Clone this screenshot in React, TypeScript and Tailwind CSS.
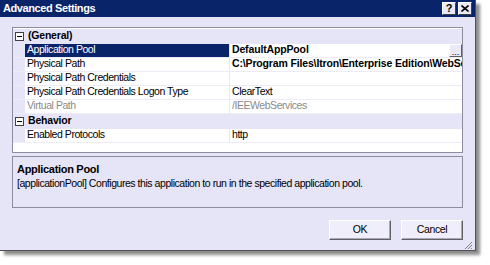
import React from 'react';

type Row = { name: string; value?: string; bold?: boolean; dim?: boolean; selected?: boolean; ellipsis?: boolean };
type Group = { title: string; rows: Row[] };

const groups: Group[] = [
  {
    title: '(General)',
    rows: [
      { name: 'Application Pool', value: 'DefaultAppPool', bold: true, selected: true, ellipsis: true },
      { name: 'Physical Path', value: 'C:\\Program Files\\Itron\\Enterprise Edition\\WebServices', bold: true },
      { name: 'Physical Path Credentials', value: '' },
      { name: 'Physical Path Credentials Logon Type', value: 'ClearText' },
      { name: 'Virtual Path', value: '/IEEWebServices', dim: true },
    ],
  },
  {
    title: 'Behavior',
    rows: [{ name: 'Enabled Protocols', value: 'http' }],
  },
];

const MinusBox = () => (
  <div className="w-[9px] h-[9px] border border-[#404040] bg-white flex items-center justify-center">
    <div className="w-[5px] h-px bg-black" />
  </div>
);

const Button = ({ label }: { label: string }) => (
  <button className="w-[62px] h-[20px] bg-[#f0eefa] border border-t-white border-l-white border-r-[#606060] border-b-[#606060] shadow-[inset_-1px_-1px_0_#a8a6c0] text-[10.5px] tracking-[-0.4px] text-black leading-none">
    {label}
  </button>
);

const TitleBtn = ({ children }: { children: React.ReactNode }) => (
  <div className="w-[14px] h-[13px] bg-[#ebe9f8] border border-t-white border-l-white border-r-[#404040] border-b-[#404040] flex items-center justify-center text-[11px] font-bold text-black leading-none">
    {children}
  </div>
);

export default function App() {
  return (
    <div className="w-[490px] h-[265px] bg-white font-['Liberation_Sans',sans-serif]">
      <div className="w-[476px] h-[251px] bg-[#e6e4f7] border-r border-b border-[#505050] shadow-[4px_4px_3px_rgba(0,0,0,0.45)] flex flex-col">
        <div className="h-[19px] bg-[#0a246a] flex items-center justify-between pl-[3px] pr-[3px]">
          <span className="text-white font-bold text-[11px] tracking-[-0.4px]">Advanced Settings</span>
          <div className="flex gap-[2px]">
            <TitleBtn>?</TitleBtn>
            <TitleBtn>
              <svg width="8" height="7" viewBox="0 0 8 7">
                <path d="M0.5 0.5 L7.5 6.5 M7.5 0.5 L0.5 6.5" stroke="black" strokeWidth="1.6" />
              </svg>
            </TitleBtn>
          </div>
        </div>

        <div className="flex flex-col px-[12px] pt-[10px] text-[10.5px] tracking-[-0.45px]">
          <div className="h-[126px] border border-[#8c8ca0] bg-white flex flex-col overflow-hidden pt-[1px]">
            {groups.map((g) => (
              <React.Fragment key={g.title}>
                <div className="h-[15px] bg-[#e6e4f7] flex items-center shrink-0">
                  <div className="w-[12px] flex justify-center pl-[1px]">
                    <MinusBox />
                  </div>
                  <span className="pl-[3px] font-bold tracking-[-0.2px] text-black">{g.title}</span>
                </div>
                {g.rows.map((r) => (
                  <div key={r.name} className="h-[14px] flex shrink-0 border-b border-[#ecebf6]">
                    <div className="w-[12px] bg-[#e6e4f7]" />
                    <div
                      className={`w-[205px] flex items-center pl-[2px] border-r border-[#e6e4f7] ${
                        r.selected ? 'bg-[#0a246a] text-white' : r.dim ? 'text-[#8a8a8a]' : 'text-black'
                      }`}
                    >
                      {r.name}
                    </div>
                    <div className="flex-1 flex items-center pl-[2px] overflow-hidden relative">
                      <span
                        className={`whitespace-nowrap ${r.bold ? 'font-bold tracking-[-0.15px]' : ''} ${
                          r.dim ? 'text-[#8a8a8a]' : 'text-black'
                        }`}
                      >
                        {r.value}
                      </span>
                      {r.ellipsis && (
                        <div className="absolute right-0 top-0 w-[13px] h-[13px] bg-[#ebe9f8] border border-t-white border-l-white border-r-[#606060] border-b-[#606060] flex items-end justify-center text-[9px] tracking-normal leading-[8px] text-black">
                          ...
                        </div>
                      )}
                    </div>
                  </div>
                ))}
              </React.Fragment>
            ))}
          </div>

          <div className="mt-[3px] h-[52px] border border-[#8c8ca0] bg-[#e6e4f7] px-[4px] pt-[5px] flex flex-col">
            <span className="font-bold text-[11px] tracking-[-0.3px] text-black leading-[14px]">Application Pool</span>
            <span className="text-black leading-[14px]">
              [applicationPool] Configures this application to run in the specified application pool.
            </span>
          </div>

          <div className="flex justify-end gap-[10px] mt-[12px]">
            <Button label="OK" />
            <Button label="Cancel" />
          </div>
        </div>

        <div className="flex-1 flex items-end justify-end pr-[2px] pb-[2px]">
          <svg width="10" height="10" viewBox="0 0 10 10">
            <path d="M9 2 L2 9 M9 5 L5 9 M9 8 L8 9" stroke="#808080" strokeWidth="1" />
          </svg>
        </div>
      </div>
    </div>
  );
}
